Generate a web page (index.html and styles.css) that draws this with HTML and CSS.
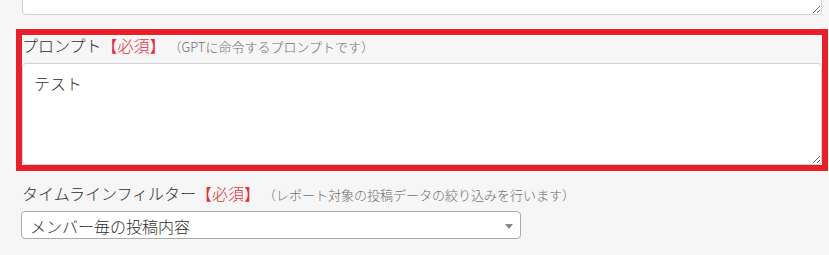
FILE: index.html
```html
<!DOCTYPE html>
<html lang="ja">
<head>
    <meta charset="UTF-8">
    <meta name="viewport" content="width=device-width, initial-scale=1.0">
    <title>レポート設定</title>
    <link rel="stylesheet" href="styles.css">
</head>
<body>
    <form class="form">
        <!-- 上のテキストエリア（画面外から続く） -->
        <div class="form-group form-group-top">
            <textarea class="form-control top-area"></textarea>
        </div>

        <!-- プロンプト -->
        <div class="form-group highlight">
            <label class="form-label" for="prompt">プロンプト<span class="required">【必須】</span><span class="note">（GPTに命令するプロンプトです）</span></label>
            <textarea class="form-control prompt-area" id="prompt">テスト</textarea>
        </div>

        <!-- タイムラインフィルター -->
        <div class="form-group">
            <label class="form-label" for="filter">タイムラインフィルター<span class="required">【必須】</span><span class="note">（レポート対象の投稿データの絞り込みを行います）</span></label>
            <div class="select-box" id="filter">
                <span class="select-text">メンバー毎の投稿内容</span>
                <span class="select-arrow"><b></b></span>
            </div>
        </div>
    </form>
</body>
</html>
```

FILE: styles.css
```css
/* 全体 */
body {
    margin: 0;
    background-color: #f6f6f6;
    font-family: "Noto Sans CJK JP", "Noto Sans", sans-serif;
    font-weight: 300;
    color: #333;
}

.form {
    width: 800px;
    margin-left: 22px;
}

.form-group {
    margin-bottom: 18px;
}

.form-group-top {
    margin-top: -60px;
    margin-bottom: 20px;
}

/* 強調枠 */
.highlight {
    outline: 6px solid #e8202a;
}

/* ラベル */
.form-label {
    display: flex;
    align-items: baseline;
    height: 20px;
    font-size: 16px;
    line-height: 20px;
    margin-bottom: 8px;
    color: #2b2b2b;
}

.required {
    color: #e0303a;
}

.note {
    margin-left: 3px;
    font-size: 13px;
    color: #6e6e6e;
}

/* テキストエリア */
.form-control {
    display: block;
    width: 100%;
    box-sizing: border-box;
    background: #fff;
    border: 1px solid #cdd1d8;
    border-radius: 4px;
    font-family: inherit;
    font-weight: inherit;
    font-size: 16px;
    line-height: 20px;
    color: #2b2b2b;
    padding: 9px 11px;
    margin: 0;
}

.top-area {
    height: 75px;
}

.prompt-area {
    height: 102px;
}

/* セレクト */
.select-box {
    position: relative;
    width: 500px;
    height: 28px;
    box-sizing: border-box;
    margin-top: 4px;
    margin-left: -1px;
    background: #fff;
    border: 1px solid #aaa;
    border-radius: 4px;
}

.select-text {
    display: block;
    padding-left: 8px;
    padding-right: 20px;
    line-height: 28px;
    font-size: 16px;
    color: #2b2b2b;
    white-space: nowrap;
    overflow: hidden;
}

.select-arrow {
    position: absolute;
    top: 1px;
    right: 1px;
    width: 20px;
    height: 26px;
}

.select-arrow b {
    position: absolute;
    left: 50%;
    top: 50%;
    margin-left: -4px;
    margin-top: -2px;
    width: 0;
    height: 0;
    border-style: solid;
    border-color: #888 transparent transparent transparent;
    border-width: 5px 4px 0 4px;
}
```
